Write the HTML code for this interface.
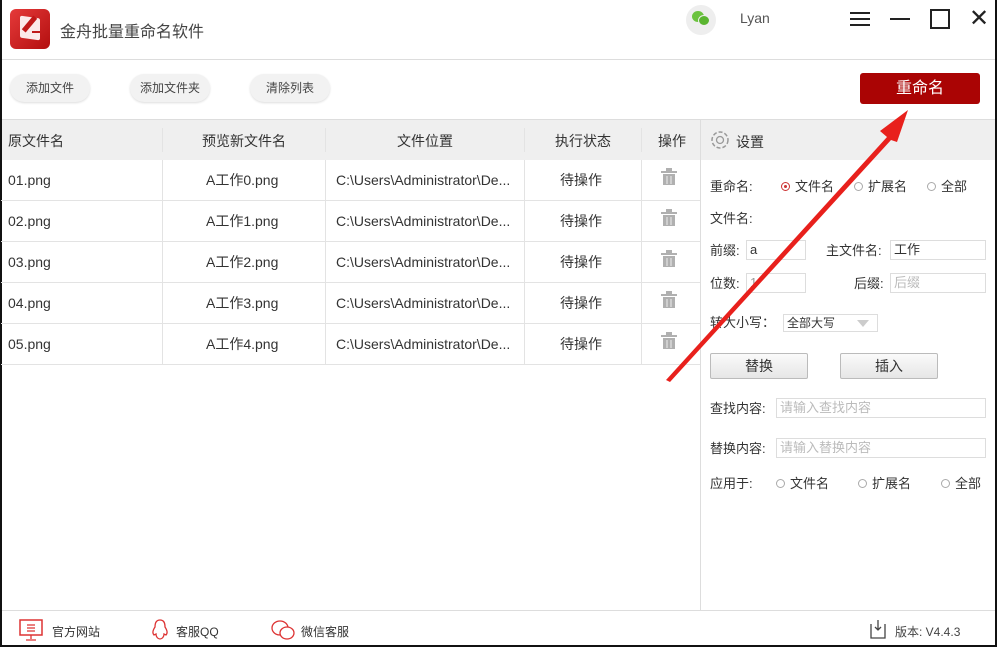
<!DOCTYPE html>
<html><head><meta charset="utf-8"><style>
*{margin:0;padding:0;box-sizing:border-box}
body{width:997px;height:647px;overflow:hidden;background:#fff;font-family:"Liberation Sans","Noto Sans CJK SC",sans-serif;color:#333;position:relative}
.a{position:absolute;white-space:nowrap}
.btn{position:absolute;top:74px;height:28px;border-radius:14px;background:#f2f2f2;box-shadow:0 1px 2px #ddd;font-size:12px;line-height:28px;text-align:center;color:#444}
.row{position:absolute;left:1px;width:699px;height:41px;border-bottom:1px solid #e3e3e3;font-size:14px}
.row div{position:absolute;top:0;line-height:40px}
.vl{position:absolute;width:1px;background:#e3e3e3}
.lbl{font-size:13px;color:#333;line-height:18px}
.inp{position:absolute;border:1px solid #ddd;height:20px;font-size:13px;line-height:18px;padding-left:3px}
.rad{display:inline-block;width:9px;height:9px;border:1px solid #aaa;border-radius:50%;vertical-align:middle;margin-right:5px;position:relative;top:-1px}
.gbtn{position:absolute;top:353px;width:98px;height:26px;border:1px solid #bbb;border-radius:2px;background:linear-gradient(#fafafa,#e6e6e6);font-size:14px;text-align:center;line-height:24px}
</style></head><body>
<div class="a" style="left:0;top:0;width:2px;height:647px;background:#111"></div>
<div class="a" style="right:0;top:0;width:2px;height:647px;background:#111"></div>
<div class="a" style="left:0;bottom:0;width:997px;height:2px;background:#111"></div>
<div class="a" style="left:10px;top:9px;width:40px;height:40px;border-radius:6px;background:linear-gradient(135deg,#e53a3a,#b30f0f)"></div>
<div class="a" style="left:20px;top:17px;width:20px;height:22px;background:#fbe9e9;border-radius:2px;transform:skewY(8deg)"></div>
<div class="a" style="top:15px;width:5px;height:18px;background:#c01818;transform:rotate(40deg);left:27px"></div>
<div class="a" style="left:32px;top:31px;width:8px;height:2px;background:#c01818"></div>
<div class="a" style="left:60px;top:18px;font-size:16px;color:#444">金舟批量重命名软件</div>
<div class="a" style="left:686px;top:5px;width:30px;height:30px;border-radius:50%;background:#eee"></div>
<div class="a" style="left:692px;top:11px;width:12px;height:11px;border-radius:50%;background:#6bc33e"></div>
<div class="a" style="left:698px;top:15px;width:12px;height:11px;border-radius:50%;background:#5ab530;border:1px solid #eee"></div>
<div class="a" style="left:740px;top:10px;font-size:14px;color:#555">Lyan</div>
<div class="a" style="left:850px;top:12px;width:20px;height:2px;background:#222;box-shadow:0 6px 0 #222,0 12px 0 #222"></div>
<div class="a" style="left:890px;top:18px;width:20px;height:2px;background:#222"></div>
<div class="a" style="left:930px;top:9px;width:20px;height:20px;border:2px solid #222"></div>
<div class="a" style="left:969px;top:6px;font-size:24px;color:#222;line-height:26px">✕</div>
<div class="a" style="left:2px;top:59px;width:993px;height:1px;background:#ddd"></div>
<div class="btn" style="left:10px;width:80px">添加文件</div>
<div class="btn" style="left:130px;width:80px">添加文件夹</div>
<div class="btn" style="left:250px;width:80px">清除列表</div>
<div class="a" style="left:860px;top:73px;width:120px;height:31px;background:#aa0404;border-radius:3px;color:#fff;font-size:16px;text-align:center;line-height:31px">重命名</div>
<div class="a" style="left:2px;top:119px;width:993px;height:1px;background:#ddd"></div>
<div class="a" style="left:2px;top:120px;width:993px;height:40px;background:#efefef"></div>
<div class="a" style="left:8px;top:131px;font-size:14px">原文件名</div>
<div class="a" style="left:202px;top:131px;font-size:14px">预览新文件名</div>
<div class="a" style="left:397px;top:131px;font-size:14px">文件位置</div>
<div class="a" style="left:555px;top:131px;font-size:14px">执行状态</div>
<div class="a" style="left:658px;top:131px;font-size:14px">操作</div>
<div class="vl" style="left:162px;top:128px;height:24px"></div>
<div class="vl" style="left:325px;top:128px;height:24px"></div>
<div class="vl" style="left:524px;top:128px;height:24px"></div>
<div class="vl" style="left:641px;top:128px;height:24px"></div>
<div class="vl" style="left:700px;top:120px;height:490px;background:#ddd"></div>
<div class="row" style="top:160px"><div style="left:7px">01.png</div><div style="left:205px">A工作0.png</div><div style="left:335px">C:\Users\Administrator\De...</div><div style="left:559px">待操作</div></div>
<div class="row" style="top:201px"><div style="left:7px">02.png</div><div style="left:205px">A工作1.png</div><div style="left:335px">C:\Users\Administrator\De...</div><div style="left:559px">待操作</div></div>
<div class="row" style="top:242px"><div style="left:7px">03.png</div><div style="left:205px">A工作2.png</div><div style="left:335px">C:\Users\Administrator\De...</div><div style="left:559px">待操作</div></div>
<div class="row" style="top:283px"><div style="left:7px">04.png</div><div style="left:205px">A工作3.png</div><div style="left:335px">C:\Users\Administrator\De...</div><div style="left:559px">待操作</div></div>
<div class="row" style="top:324px"><div style="left:7px">05.png</div><div style="left:205px">A工作4.png</div><div style="left:335px">C:\Users\Administrator\De...</div><div style="left:559px">待操作</div></div>
<div class="vl" style="left:162px;top:160px;height:204px"></div>
<div class="vl" style="left:325px;top:160px;height:204px"></div>
<div class="vl" style="left:524px;top:160px;height:204px"></div>
<div class="vl" style="left:641px;top:160px;height:204px"></div>
<svg class="a" style="left:660px;top:168px" width="20" height="185">
<g fill="#b0b0b0">
<rect x="1" y="3" width="16" height="2"/><rect x="6" y="0" width="6" height="3"/><rect x="3" y="6" width="12" height="11"/>
<rect x="1" y="44" width="16" height="2"/><rect x="6" y="41" width="6" height="3"/><rect x="3" y="47" width="12" height="11"/>
<rect x="1" y="85" width="16" height="2"/><rect x="6" y="82" width="6" height="3"/><rect x="3" y="88" width="12" height="11"/>
<rect x="1" y="126" width="16" height="2"/><rect x="6" y="123" width="6" height="3"/><rect x="3" y="129" width="12" height="11"/>
<rect x="1" y="167" width="16" height="2"/><rect x="6" y="164" width="6" height="3"/><rect x="3" y="170" width="12" height="11"/>
</g>
<g stroke="#eee" stroke-width="1"><path d="M7 8v8M11 8v8M7 49v8M11 49v8M7 90v8M11 90v8M7 131v8M11 131v8M7 172v8M11 172v8"/></g>
</svg>
<svg class="a" style="left:709px;top:129px" width="22" height="22"><circle cx="11" cy="11" r="8" fill="none" stroke="#999" stroke-width="1.5" stroke-dasharray="4 2"/><circle cx="11" cy="11" r="3.5" fill="none" stroke="#999" stroke-width="1.3"/></svg>
<div class="a" style="left:736px;top:132px;font-size:14px">设置</div>
<div class="a lbl" style="left:710px;top:178px">重命名:</div>
<div class="a lbl" style="left:781px;top:178px"><span class="rad" style="border-color:#c33"><span style="position:absolute;left:2px;top:2px;width:3px;height:3px;background:#c33;border-radius:50%"></span></span>文件名</div>
<div class="a lbl" style="left:854px;top:178px"><span class="rad"></span>扩展名</div>
<div class="a lbl" style="left:927px;top:178px"><span class="rad"></span>全部</div>
<div class="a lbl" style="left:710px;top:210px">文件名:</div>
<div class="a lbl" style="left:710px;top:242px">前缀:</div>
<div class="inp" style="left:746px;top:240px;width:60px">a</div>
<div class="a lbl" style="left:826px;top:242px">主文件名:</div>
<div class="inp" style="left:890px;top:240px;width:96px">工作</div>
<div class="a lbl" style="left:710px;top:275px">位数:</div>
<div class="inp" style="left:746px;top:273px;width:60px;color:#999">1</div>
<div class="a lbl" style="left:854px;top:275px">后缀:</div>
<div class="inp" style="left:890px;top:273px;width:96px;color:#bbb">后缀</div>
<div class="a lbl" style="left:710px;top:314px">转大小写：</div>
<div class="inp" style="left:783px;top:314px;width:95px;height:18px;font-size:12px;line-height:16px">全部大写<span style="position:absolute;right:8px;top:5px;border:6px solid transparent;border-top:7px solid #ccc;border-bottom:0"></span></div>
<div class="gbtn" style="left:710px">替换</div>
<div class="gbtn" style="left:840px">插入</div>
<div class="a lbl" style="left:710px;top:400px">查找内容:</div>
<div class="inp" style="left:776px;top:398px;width:210px;color:#bbb">请输入查找内容</div>
<div class="a lbl" style="left:710px;top:440px">替换内容:</div>
<div class="inp" style="left:776px;top:438px;width:210px;color:#bbb">请输入替换内容</div>
<div class="a lbl" style="left:710px;top:475px">应用于:</div>
<div class="a lbl" style="left:776px;top:475px"><span class="rad"></span>文件名</div>
<div class="a lbl" style="left:858px;top:475px"><span class="rad"></span>扩展名</div>
<div class="a lbl" style="left:941px;top:475px"><span class="rad"></span>全部</div>
<div class="a" style="left:2px;top:610px;width:993px;height:1px;background:#ddd"></div>
<svg class="a" style="left:18px;top:619px" width="26" height="22"><rect x="2" y="1" width="22" height="15" fill="none" stroke="#d33" stroke-width="1.5"/><path d="M13 16v4M8 21h10M9 6h8M9 9h8M9 12h8" stroke="#d33" stroke-width="1.3"/></svg>
<div class="a" style="left:52px;top:623px;font-size:12px">官方网站</div>
<svg class="a" style="left:150px;top:618px" width="20" height="24"><path d="M10 2c-4 0-5 3-5 7-2 3-3 6-1 8l2-1c0 3 2 5 4 5s4-2 4-5l2 1c2-2 1-5-1-8 0-4-1-7-5-7z" fill="none" stroke="#d33" stroke-width="1.3"/></svg>
<div class="a" style="left:176px;top:623px;font-size:12px">客服QQ</div>
<svg class="a" style="left:270px;top:618px" width="28" height="24"><ellipse cx="10" cy="10" rx="8" ry="7" fill="none" stroke="#d33" stroke-width="1.3"/><ellipse cx="17" cy="15" rx="7" ry="6" fill="#fff" stroke="#d33" stroke-width="1.3"/></svg>
<div class="a" style="left:301px;top:623px;font-size:12px">微信客服</div>
<svg class="a" style="left:868px;top:618px" width="20" height="22"><path d="M3 6v14h14V6M10 2v10M7 9l3 3 3-3" fill="none" stroke="#444" stroke-width="1.3"/></svg>
<div class="a" style="left:895px;top:623px;font-size:12px;color:#444">版本: V4.4.3</div>
<svg class="a" style="left:0;top:0" width="997" height="647"><polygon points="666,380 887,137 880,131 908,110 897,142 891,140 670,382" fill="#e8201c"/></svg>
</body></html>
